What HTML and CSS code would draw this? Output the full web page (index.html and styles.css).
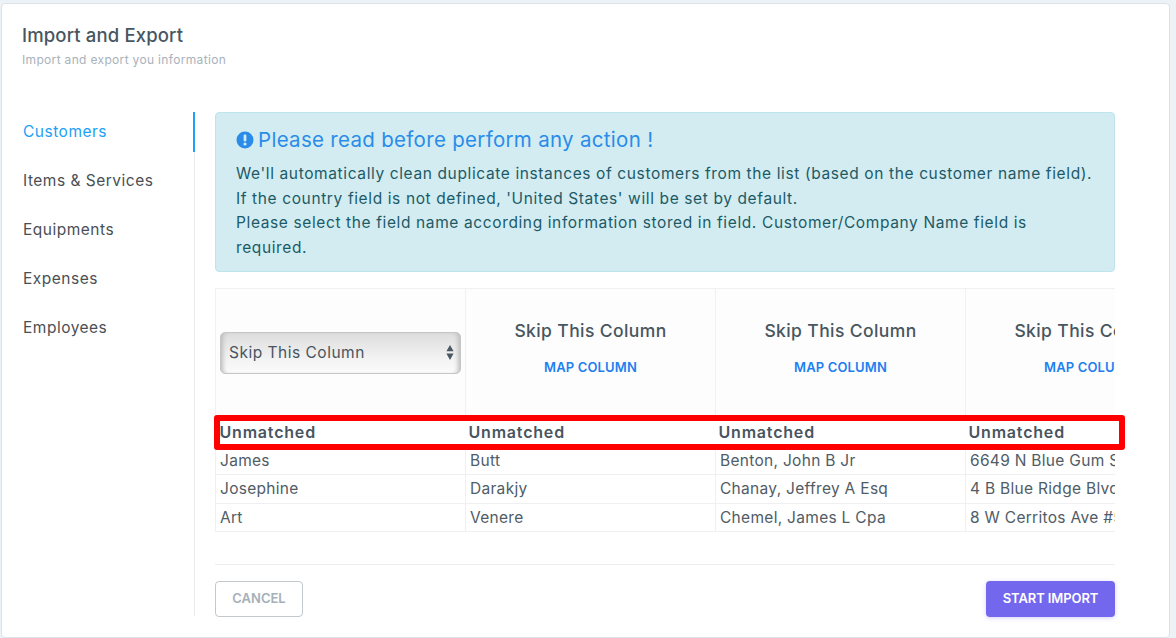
FILE: index.html
```html
<!DOCTYPE html>
<html lang="en">
<head>
<meta charset="utf-8">
<title>Import and Export</title>
<link rel="stylesheet" href="styles.css">
</head>
<body>
<div class="card">
  <header class="card-head">
    <h1 class="title">Import and Export</h1>
    <p class="subtitle">Import and export you information</p>
  </header>
  <div class="card-body">
    <nav class="side">
      <a class="side-item active">Customers</a>
      <a class="side-item">Items &amp; Services</a>
      <a class="side-item">Equipments</a>
      <a class="side-item">Expenses</a>
      <a class="side-item">Employees</a>
    </nav>
    <main class="main">
      <section class="alert">
        <h2 class="alert-title">
          <svg class="alert-icon" viewBox="0 0 18 18" aria-hidden="true"><circle cx="9" cy="9" r="8.5" fill="#2a8ce8"/><rect x="7.6" y="3.6" width="2.8" height="6.8" rx="1.1" fill="#d1ecf1"/><circle cx="9" cy="13" r="1.6" fill="#d1ecf1"/></svg>
          Please read before perform any action !
        </h2>
        <p class="alert-line">We'll automatically clean duplicate instances of customers from the list (based on the customer name field).</p>
        <p class="alert-line">If the country field is not defined, 'United States' will be set by default.</p>
        <p class="alert-line">Please select the field name according information stored in field. Customer/Company Name field is required.</p>
      </section>
      <div class="table-wrap">
        <table class="map-table">
          <thead>
            <tr class="map-row">
              <th class="map-cell">
                <span class="select-box">
                  <select class="select"><option>Skip This Column</option></select>
                  <svg class="select-arrows" viewBox="0 0 8 15" aria-hidden="true"><path d="M4 0 7.6 6.2H.4zM.4 8.6h7.2L4 15z" fill="#4a5963"/></svg>
                </span>
              </th>
              <th class="map-cell"><div class="col-name">Skip This Column</div><a class="col-link">MAP COLUMN</a></th>
              <th class="map-cell"><div class="col-name">Skip This Column</div><a class="col-link">MAP COLUMN</a></th>
              <th class="map-cell"><div class="col-name">Skip This Column</div><a class="col-link">MAP COLUMN</a></th>
            </tr>
            <tr class="status-row">
              <th>Unmatched</th><th>Unmatched</th><th>Unmatched</th><th>Unmatched</th>
            </tr>
          </thead>
          <tbody>
            <tr><td>James</td><td>Butt</td><td>Benton, John B Jr</td><td>6649 N Blue Gum St</td></tr>
            <tr><td>Josephine</td><td>Darakjy</td><td>Chanay, Jeffrey A Esq</td><td>4 B Blue Ridge Blvd</td></tr>
            <tr><td>Art</td><td>Venere</td><td>Chemel, James L Cpa</td><td>8 W Cerritos Ave #54</td></tr>
          </tbody>
        </table>
      </div>
      <footer class="actions">
        <button class="btn btn-cancel">CANCEL</button>
        <button class="btn btn-start">START IMPORT</button>
      </footer>
    </main>
  </div>
  <div class="highlight"></div>
</div>
</body>
</html>
```
FILE: styles.css
```css
* { box-sizing: border-box; }
html, body { margin: 0; height: 100%; }
body {
  background: #edf2f6;
  font-family: "Inter", "Open Sans", sans-serif;
  color: #48555f;
  overflow: hidden;
  padding: 3px 6px 0 1px;
}
.card {
  position: relative;
  height: 635px;
  background: #fff;
  border: 1px solid #dbe3e8;
  border-radius: 4px;
}
.card-head { padding: 19px 20px 0; height: 108px; }
.title { margin: 0; font-size: 18.5px; line-height: 24px; font-weight: 500; color: #48565f; letter-spacing: 0.15px; }
.subtitle { margin: 4px 0 0; font-size: 12px; line-height: 18px; color: #a9b2ba; letter-spacing: 0.33px; }
.card-body { display: flex; }
.side {
  width: 193px;
  height: 504px;
  border-right: 1px solid #e8ebee;
  display: flex;
  flex-direction: column;
}
.side-item { height: 49px; padding: 10px 20px 0 21px; font-size: 15.5px; line-height: 19px; letter-spacing: 0.5px; color: #4a4f55; }
.side-item.active { height: 40px; margin-bottom: 9px; color: #22a0f5; border-right: 2px solid #22a0f5; margin-right: -1px; }
.main { margin-left: 20px; width: 900px; }
.alert {
  height: 160px;
  background: #d2ecf2;
  border: 1px solid #bee5eb;
  border-radius: 4px;
  padding: 14px 18px 0 20px;
  color: #1c5a66;
}
.alert-title { margin: 0 0 9.4px; font-size: 20.5px; line-height: 26px; font-weight: 400; letter-spacing: 0.3px; color: #2a8ce8; display: flex; align-items: center; gap: 4px; }
.alert-icon { width: 18px; height: 18px; flex: none; }
.alert-line { margin: 0; font-size: 15.5px; line-height: 24.4px; letter-spacing: 0.62px; }
.table-wrap { margin-top: 16px; overflow: hidden; width: 900px; }
.map-table { border-collapse: collapse; table-layout: fixed; width: 1000px; }
.map-table th, .map-table td { width: 250px; white-space: nowrap; overflow: hidden; text-align: left; }
.map-row th.map-cell {
  height: 131px;
  background: #fdfdfd;
  border: 1px solid #f0f1f2;
  border-bottom: 0;
  padding: 0 4px 3px;
  text-align: center;
  vertical-align: middle;
}
.select-box { position: relative; display: block; height: 42px; }
.select {
  appearance: none;
  width: 100%;
  height: 42px;
  padding: 0 8px;
  font: inherit;
  font-weight: 400;
  font-size: 15.5px;
  letter-spacing: 0.5px;
  color: #48555f;
  border: 1px solid #c4c6c8;
  border-radius: 5px;
  background: linear-gradient(#dddddd, #f3f3f3 65%, #fbfbfb);
  box-shadow: inset 5px 0 4px -3px #bdbdbd, inset -5px 0 4px -3px #bdbdbd;
}
.select-arrows { position: absolute; right: 7px; top: 13px; width: 8px; height: 15px; }
.col-name { font-size: 17.5px; line-height: 24px; font-weight: 500; letter-spacing: 0.4px; color: #48565f; }
.col-link { display: block; margin: 16px 0 11px; font-size: 13px; line-height: 16px; font-weight: 600; letter-spacing: 0.15px; color: #1e80f0; }
.status-row th { height: 27px; padding: 0 4px 2px; font-size: 16px; font-weight: 600; letter-spacing: 0.8px; color: #48555f; }
.status-row th + th { padding-left: 3px; }
.map-table td { height: 28.3px; padding: 0 4px; font-size: 15.5px; letter-spacing: 0.3px; color: #505c66; border: 1px solid #eff0f1; }
.actions {
  margin-top: 32px;
  padding-top: 16px;
  border-top: 1px solid #eceeef;
  display: flex;
  justify-content: space-between;
}
.btn { height: 36px; padding: 0 0 2px; border-radius: 4px; font: inherit; font-size: 13px; font-weight: 600; }
.btn-cancel { width: 88px; background: #fff; border: 1px solid #c2c8cc; color: #a5b0b9; }
.btn-start { width: 129px; background: #7367ee; border: 0; color: #fff; letter-spacing: -0.1px; box-shadow: 0 1px 4px rgba(115, 103, 238, .3); }
.highlight {
  position: absolute;
  left: 212px;
  top: 411px;
  width: 911px;
  height: 35px;
  border: 6px solid #f00;
  border-radius: 3px;
  pointer-events: none;
}
```
